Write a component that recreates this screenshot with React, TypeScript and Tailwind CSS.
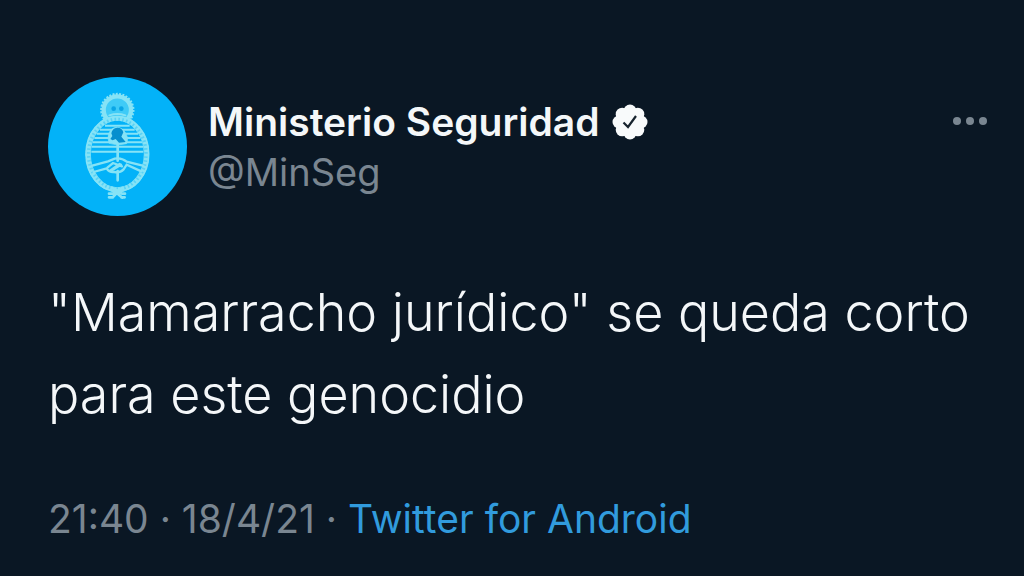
function Emblem() {
  return (
    <svg viewBox="24 21 417 417" className="size-full" fill="none" stroke="#86e3f6" strokeLinecap="round" role="img" aria-label="Escudo nacional">
      <circle cx="232" cy="120" r="41" fill="#3fcbf7" strokeWidth="13" />
      <circle cx="232" cy="120" r="48" strokeWidth="7" strokeDasharray="6 4" strokeLinecap="butt" />
      <circle cx="221" cy="116" r="7" fill="#0aa6e6" stroke="none" />
      <circle cx="244" cy="116" r="7" fill="#0aa6e6" stroke="none" />
      <path d="M208 136q24-8 48 0M202 146q30-9 60 0" strokeWidth="6" />
      <ellipse cx="232" cy="252" rx="82" ry="102" fill="#03b2f8" strokeWidth="5" />
      <ellipse cx="232" cy="252" rx="88" ry="107" stroke="#58d2f6" strokeWidth="14" />
      <ellipse cx="232" cy="252" rx="88" ry="107" strokeWidth="14" strokeDasharray="7 5" strokeLinecap="butt" />
      <ellipse cx="232" cy="252" rx="94" ry="112" strokeWidth="5" />
      <path d="M195 167h74M180 179h104M170 191h124M163 204h138M158 217h148M155 230h154M154 245h156" strokeWidth="6" strokeLinecap="butt" />
      <path d="M207 219q-8-24 7-41 18-14 37 3 17 19 9 40l-26 4z" fill="#86e3f6" strokeWidth="2" />
      <path d="M211 207l6-9-3-8q2-15 18-17 15 0 18 14l-6 13 13 16-20 2-10-11-9 4z" fill="#068fce" stroke="none" />
      <path d="M233 222v50M233 303v28" strokeWidth="8" />
      <path d="M157 287l47-13 20-8q20-4 36 9l48 12M161 306l39-11q8 13 23 11 17 3 28-8l9-14 44 20M202 293l17-14 27 10M217 300l26-16M210 302l29-20" strokeWidth="7" />
      <path d="M207 371h11l29-17M217 354l29 17h9M218 382l12-13 17 14M207 382h12M244 382h10" strokeWidth="8" />
    </svg>
  );
}

function VerifiedBadge() {
  return (
    <svg viewBox="0 0 36 36" className="size-9 shrink-0" role="img" aria-label="Cuenta verificada">
      <g fill="#f8fafb">
        <circle cx="18" cy="18" r="14" />
        <circle cx="18" cy="7" r="6.5" />
        <circle cx="25.8" cy="10.2" r="6.5" />
        <circle cx="29" cy="18" r="6.5" />
        <circle cx="25.8" cy="25.8" r="6.5" />
        <circle cx="18" cy="29" r="6.5" />
        <circle cx="10.2" cy="25.8" r="6.5" />
        <circle cx="7" cy="18" r="6.5" />
        <circle cx="10.2" cy="10.2" r="6.5" />
      </g>
      <path d="M11.5 18.5l4.5 4.5 8-11" fill="none" stroke="#17232e" strokeWidth="2.2" />
    </svg>
  );
}

export default function App() {
  return (
    <main className="min-h-screen bg-[#0a1724] pr-9 pl-12 pt-[77px] font-['Inter',sans-serif] text-[#f4f7f9]">
      <article>
        <header className="flex items-start">
          <div className="size-[139px] shrink-0 overflow-hidden rounded-full bg-[#03b2f8]">
            <Emblem />
          </div>
          <div className="ml-[21px] min-w-0 flex-1 pt-5">
            <div className="flex items-center gap-3">
              <h1 className="text-[39px] leading-[50px] font-semibold">Ministerio Seguridad</h1>
              <VerifiedBadge />
            </div>
            <p className="text-[38px] leading-[50px] text-[#7a8691]">@MinSeg</p>
          </div>
          <button type="button" aria-label="Más opciones" className="mt-8 flex h-6 items-center">
            <svg viewBox="0 0 36 10" className="h-2.5 w-9" fill="#7a8691">
              <circle cx="5" cy="5" r="4" />
              <circle cx="18" cy="5" r="4" />
              <circle cx="31" cy="5" r="4" />
            </svg>
          </button>
        </header>
        <p className="mt-14 text-[52px] leading-[82px] font-light">"Mamarracho jurídico" se queda corto para este genocidio</p>
        <footer className="mt-[58px] text-[39px] leading-[50px] text-[#7a8691]">
          21:40 · 18/4/21 · <a href="#" className="text-[#319bdd]">Twitter for Android</a>
        </footer>
      </article>
    </main>
  );
}
